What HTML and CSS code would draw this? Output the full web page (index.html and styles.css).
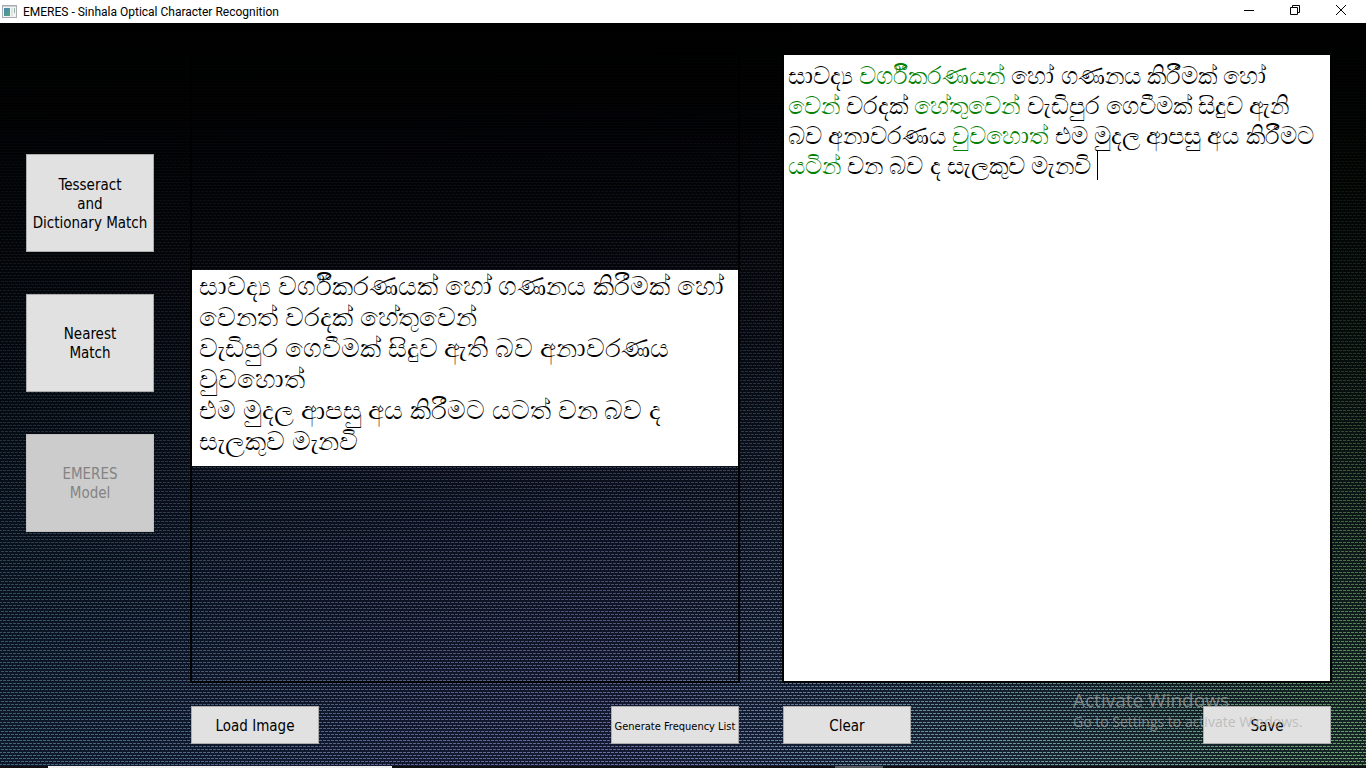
FILE: index.html
```html
<!DOCTYPE html>
<html lang="en">
<head>
<meta charset="utf-8">
<title>EMERES - Sinhala Optical Character Recognition</title>
<link rel="stylesheet" href="styles.css">
</head>
<body>
<div class="window">
  <header class="titlebar">
    <svg class="app-icon" width="16" height="14" viewBox="0 0 16 14" aria-hidden="true">
      <defs><linearGradient id="pane" x1="0" y1="0" x2="1" y2="1"><stop offset="0" stop-color="#4a84b8"/><stop offset="1" stop-color="#55a878"/></linearGradient></defs>
      <rect x="0.5" y="0.5" width="14" height="12" fill="#f4f4f4" stroke="#a9adb2"/>
      <path d="M1 1.500h13" stroke="#c9ced4"/>
      <rect x="2" y="3" width="6" height="8" fill="url(#pane)"/>
      <rect x="9" y="3" width="2" height="8" fill="#dfe3e6"/>
      <rect x="12" y="3" width="1" height="5" fill="#8fb5a8"/>
    </svg>
    <h1 class="title">EMERES - Sinhala Optical Character Recognition</h1>
    <div class="controls">
      <button class="control" aria-label="Minimize"><svg width="12" height="12" viewBox="0 0 12 12"><path d="M1 6.500h10" stroke="#000"/></svg></button>
      <button class="control" aria-label="Restore"><svg width="12" height="12" viewBox="0 0 12 12"><path d="M1.500 3.500h7v7h-7zM3.500 3.500v-2h7v7h-2" fill="none" stroke="#000"/></svg></button>
      <button class="control" aria-label="Close"><svg width="12" height="12" viewBox="0 0 12 12"><path d="M1 1l10 10M11 1L1 11" stroke="#000"/></svg></button>
    </div>
  </header>
  <main class="main">
    <nav class="sidebar" aria-label="Recognition methods">
      <button class="button method">Tesseract<br>and<br>Dictionary Match</button>
      <button class="button method">Nearest<br>Match</button>
      <button class="button method" disabled>EMERES<br>Model</button>
    </nav>
    <div class="workspace">
      <section class="panel viewer" aria-label="Source image">
        <div class="scan" lang="si">සාවද්‍ය වර්ගීකරණයක් හෝ ගණනය කිරීමක් හෝ<br>වෙනත් වරදක් හේතුවෙන්<br>වැඩිපුර ගෙවීමක් සිදුව ඇති බව අනාවරණය<br>වුවහොත්<br>එම මුදල ආපසු අය කිරීමට යටත් වන බව ද<br>සැලකුව මැනවි</div>
      </section>
      <div class="panel editor" lang="si" role="textbox" aria-multiline="true" aria-label="Recognized text" contenteditable="true" spellcheck="false">සාවද්‍ය <span class="fix">වර්ගීකරණයන්</span> හෝ ගණනය කිරීමක් හෝ<br><span class="fix">වෙන්</span> වරදක් <span class="fix">හේතුවෙන්</span> වැඩිපුර ගෙවීමක් සිදුව ඇනි<br>බව අනාවරණය <span class="fix">වුවහොත්</span> එම මුදල ආපසු අය කිරීමට<br><span class="fix">යටින්</span> වන බව ද සැලකුව මැනවි <span class="caret"></span></div>
      <div class="actions">
        <button class="button">Load Image</button>
        <button class="button small">Generate Frequency List</button>
      </div>
      <div class="actions">
        <button class="button">Clear</button>
        <button class="button">Save</button>
      </div>
    </div>
    <aside class="watermark">
      <p class="watermark-title">Activate Windows</p>
      <p class="watermark-text">Go to Settings to activate Windows.</p>
    </aside>
  </main>
  <footer class="taskbar"><span class="task"></span><span class="task-dim"></span></footer>
</div>
</body>
</html>
```
FILE: styles.css
```css
* { box-sizing: border-box; }

body { margin: 0; font-family: "Noto Sans", "Open Sans", sans-serif; }

.window { display: flex; flex-direction: column; min-height: 100vh; }

.titlebar { display: flex; align-items: center; height: 23px; padding-left: 2px; background: #fff; }
.title { flex: 1; margin: 0 0 0 5px; font: 400 12px/20px Roboto, sans-serif; color: #000; }
.controls { display: flex; align-self: flex-start; padding-right: 2px; }
.control { display: grid; place-items: center; width: 46px; height: 20px; padding: 0; border: 0; background: none; }

/* Woven backdrop: staggered 3px dashes over a coloured glow, fading to black at the top */
.main {
  position: relative;
  display: flex;
  flex: 1;
  padding: 30px 34px 22px 26px;
  background:
    linear-gradient(180deg, #000 0, rgba(0, 0, 0, .94) 14%, rgba(0, 0, 0, .7) 42%, rgba(0, 0, 0, .38) 68%, rgba(0, 0, 0, 0) 100%),
    conic-gradient(at 1px 1px, transparent 75%, rgba(1, 5, 22, .8) 0) 0 0 / 4px 6px,
    conic-gradient(at 1px 1px, transparent 75%, rgba(1, 5, 22, .8) 0) 2px 3px / 4px 6px,
    repeating-linear-gradient(180deg, transparent 0 1px, rgba(1, 5, 22, .8) 1px 3px),
    linear-gradient(90deg, #406a80 0, #5a6a98 30%, #6672a8 46%, #6c98b0 66%, #6ca294 82%, #68aa62 100%);
}

.sidebar { display: flex; flex-direction: column; gap: 42px; margin-right: 36px; padding-top: 101px; }

.button {
  width: 128px;
  height: 38px;
  padding: 2px 0 0;
  border: 1px solid #adadad;
  background: #e1e1e1;
  color: #000;
  font: 400 15px/19px "DejaVu Sans Condensed", "Noto Sans", sans-serif;
}
.button:disabled { background: #ccc; border-color: #bfbfbf; color: #838383; }
.method { height: 98px; }
.small { font-size: 11px; white-space: nowrap; }

.workspace {
  display: grid;
  flex: 1;
  grid-template-columns: minmax(0, 1fr) minmax(0, 1fr);
  grid-template-rows: 1fr auto;
  gap: 23px 42px;
}
.panel { border: 2px solid #000; color: #000; }
.viewer { display: flex; flex-direction: column; justify-content: center; }
.scan { padding: 0 0 10px 7px; background: #fff; font-size: 26px; line-height: 31px; white-space: nowrap; }
.editor { padding: 5px 4px; background: #fff; font-size: 24px; line-height: 30px; white-space: nowrap; outline: 0; }
.fix { color: #008000; }
.caret { display: inline-block; width: 1px; height: 30px; background: #000; vertical-align: top; }
.actions { display: flex; justify-content: space-between; padding: 0 1px; }

.watermark {
  position: absolute;
  right: 57px;
  bottom: 34px;
  width: 236px;
  color: rgba(170, 170, 170, .66);
  font-family: "Open Sans", sans-serif;
  pointer-events: none;
}
.watermark p { margin: 0; }
.watermark-title { font-size: 19px; line-height: 24px; }
.watermark-text { font-size: 14px; line-height: 20px; }

.taskbar { display: flex; height: 2px; padding-left: 48px; background: #101014; }
.task { width: 344px; margin-right: 443px; background: #f0f0f0; }
.task-dim { width: 48px; background: #55585c; }
```
